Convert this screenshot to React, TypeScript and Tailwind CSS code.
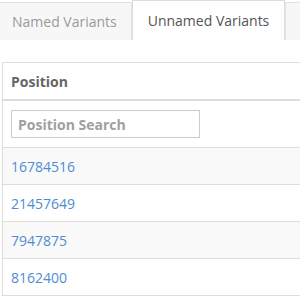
const POSITIONS = ["16784516", "21457649", "7947875", "8162400"];

export default function App() {
  return (
    <div
      className="h-[298px] w-[300px] overflow-hidden bg-white text-[14px]"
      style={{ fontFamily: '"Open Sans", sans-serif' }}
    >
      <div className="flex h-[40px] items-end border-b border-[#dddddd]">
        <div className="-mb-px flex h-[38px] w-[132px] shrink-0 items-center border-t border-r border-[#e3e3e3] bg-[#f7f7f7] pl-3 text-[#9a9a9a]">
          Named Variants
        </div>
        <div className="-mb-px flex h-[40px] w-[153px] shrink-0 items-center justify-center border-x border-t border-[#dddddd] bg-white text-[#555555]">
          Unnamed Variants
        </div>
        <div className="-mb-px h-[38px] flex-1 border-t border-l border-[#e3e3e3] bg-[#f7f7f7]" />
      </div>

      <div className="ml-[2px] mt-[22px] w-[320px] border-t border-l border-[#dddddd]">
        <div className="flex h-[38px] items-center border-b-2 border-[#dddddd] pl-[8px] font-bold text-[#666666]">
          Position
        </div>
        <div className="flex h-[47px] items-center border-b border-[#dddddd] pl-[8px]">
          <input
            placeholder="Position Search"
            className="h-[28px] w-[189px] border border-[#cccccc] px-[6px] font-bold text-[#555555] outline-none placeholder:text-[#a0a0a0]"
          />
        </div>
        {POSITIONS.map((pos, idx) => (
          <div
            key={pos}
            className={
              "flex h-[37px] items-center border-b border-[#dddddd] pl-[8px] text-[#4f8dd0] " +
              (idx % 2 === 0 ? "bg-[#f9f9f9]" : "bg-white")
            }
          >
            {pos}
          </div>
        ))}
      </div>
    </div>
  );
}
